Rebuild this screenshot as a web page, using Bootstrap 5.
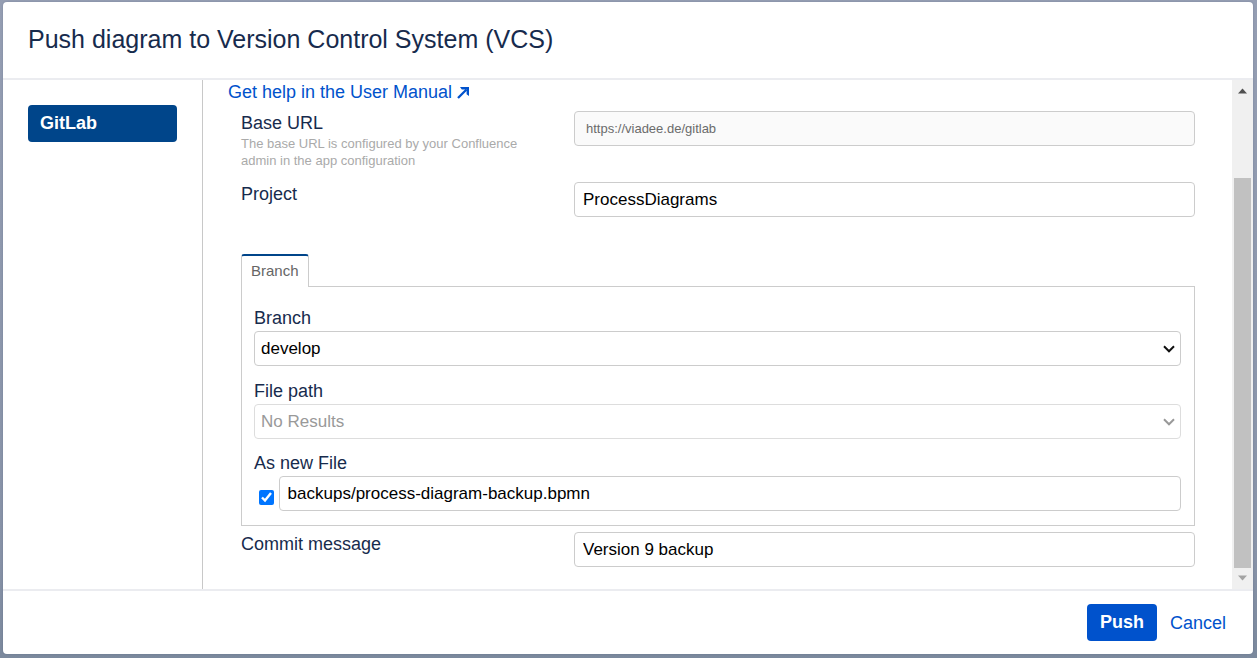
<!DOCTYPE html>
<html lang="en">
<head>
<meta charset="utf-8">
<meta name="viewport" content="width=device-width, initial-scale=1">
<title>Push diagram to Version Control System (VCS)</title>
<link href="https://cdn.jsdelivr.net/npm/bootstrap@5.3.0/dist/css/bootstrap.min.css" rel="stylesheet">
<style>
  body {
    font-family: "Liberation Sans", Arial, sans-serif;
    font-size: 18px;
    line-height: 24px;
    color: #172b4d;
    background: linear-gradient(#959eb3, #8792a7 85%, #7b899d);
  }
  .page { padding: 2px 4px 4px 3px; }
  .dialog { border-radius: 4px; box-shadow: 0 0 2px rgba(9, 30, 66, .2); overflow: hidden; }
  .dialog-head { height: 78px; padding: 0 25px 2px; border-bottom: 2px solid #ebecf0; }
  .dialog-head h1 { font-size: 25px; line-height: 32px; }
  .dialog-foot { height: 65px; padding: 0 27px 0 25px; border-top: 2px solid #ebecf0; gap: 13px; }
  a { color: #0052cc; text-decoration: none; }
  .side { width: 200px; padding: 25px; border-right: 1px solid #c8c8c8; }
  .side .nav-link {
    background: #00458a; color: #fff; font-weight: 700;
    border-radius: 4px; height: 37px; padding: 6px 12px;
  }
  .main { padding: 0 37px 22px 25px; min-width: 0; }
  .manual svg { vertical-align: -1px; }
  .fields { margin: 7px 0 0 13px; }
  .field-row { margin-bottom: 13px; }
  .label-cell { flex: 0 0 333px; }
  .label-cell small { display: block; max-width: 290px; font-size: 13px; line-height: 17px; color: #aaa; }
  .form-control, .form-select {
    height: 35px; border: 1px solid #ccc; border-radius: 4px;
    font-size: 17px; line-height: 24px; color: #000; padding: 4px 8px;
  }
  .form-control[readonly] { background: #fafafa; color: #6b6b6b; font-size: 13px; padding: 4px 11px; }
  .form-select {
    padding: 4px 32px 4px 6px;
    background-image: url("data:image/svg+xml,%3Csvg xmlns='http://www.w3.org/2000/svg' viewBox='0 0 12 8'%3E%3Cpath d='M1 1.3l5 5 5-5' fill='none' stroke='%23111' stroke-width='2'/%3E%3C/svg%3E");
    background-size: 12px 8px; background-position: right 5px center;
  }
  .form-select:disabled { background-color: #fff; color: #999; border-color: #ddd;
    background-image: url("data:image/svg+xml,%3Csvg xmlns='http://www.w3.org/2000/svg' viewBox='0 0 12 8'%3E%3Cpath d='M1 1.3l5 5 5-5' fill='none' stroke='%23999' stroke-width='2'/%3E%3C/svg%3E");
  }
  .nav-tabs { border: 0; margin-top: 37px; }
  .nav-tabs .nav-link, .nav-tabs .nav-link.active {
    font-size: 15px; line-height: 20px; color: #666; height: 33px; padding: 4px 9px 6px;
    border: 1px solid #ccc; border-top: 2px solid #00458a; border-bottom: 0;
    border-radius: 3px 3px 0 0; margin: 0; position: relative; z-index: 1;
  }
  .branch-box { border: 1px solid #ccc; margin-top: -1px; padding: 19px 13px 14px 12px; }
  .stack { margin-bottom: 12px; }
  .stack:first-child { margin-bottom: 13px; }
  .stack label { margin-bottom: 1px; }
  .new-file { gap: 5px; }
  .new-file input[type=checkbox] { width: 15px; height: 15px; margin: 7px 0 0 5px; accent-color: #0075ff; }
  .commit-row { margin-top: 6px; }
  .btn-push {
    background: #0052cc; color: #fff; font-weight: 700; font-size: 18px; line-height: 24px;
    height: 37px; padding: 5px 13px 7px; border: 0; border-radius: 4px;
  }
  .btn-push:hover { background: #0065ff; color: #fff; }
  .bar { width: 21px; background: #f0f0f0; padding: 8px 2px; }
  .bar svg { display: block; margin: 0 auto; }
  .thumb { margin: 84px 0 7px; background: #c1c1c1; }
</style>
</head>
<body>
<div class="page min-vh-100 d-flex">
  <div class="dialog bg-white flex-grow-1 d-flex flex-column" role="dialog" aria-labelledby="dialog-title">
    <header class="dialog-head d-flex align-items-center">
      <h1 id="dialog-title" class="fw-normal mb-0">Push diagram to Version Control System (VCS)</h1>
    </header>

    <div class="d-flex flex-grow-1">
      <nav class="side flex-shrink-0">
        <a class="nav-link" href="#gitlab" aria-current="page">GitLab</a>
      </nav>

      <form class="main flex-grow-1" id="push-form">
        <a class="manual d-block" href="#manual">Get help in the User Manual
          <svg width="12" height="13" viewBox="0 0 12 13" aria-hidden="true"><path d="M1 12L9.500 3.500" fill="none" stroke="#0052cc" stroke-width="2.300"/><path d="M3 1h9v9L9.600 8.200V3.400H4.800z" fill="#0052cc"/></svg></a>

        <div class="fields">
          <div class="field-row d-flex">
            <div class="label-cell"><label class="d-block" for="base-url">Base URL</label><small id="base-help">The base URL is configured by your Confluence admin in the app configuration</small></div>
            <div class="flex-grow-1"><input class="form-control" id="base-url" type="text" value="https://viadee.de/gitlab" aria-describedby="base-help" readonly></div>
          </div>
          <div class="d-flex">
            <div class="label-cell"><label class="d-block" for="project">Project</label></div>
            <div class="flex-grow-1"><input class="form-control" id="project" type="text" value="ProcessDiagrams"></div>
          </div>

          <ul class="nav nav-tabs">
            <li class="nav-item"><button class="nav-link active bg-white" id="branch-tab" type="button" data-bs-toggle="tab" data-bs-target="#branch-pane">Branch</button></li>
          </ul>
          <div class="branch-box" id="branch-pane" aria-labelledby="branch-tab">
            <div class="stack">
              <label class="d-block" for="branch">Branch</label>
              <select class="form-select" id="branch"><option>develop</option></select>
            </div>
            <div class="stack">
              <label class="d-block" for="path">File path</label>
              <select class="form-select" id="path" disabled><option>No Results</option></select>
            </div>
            <div class="stack mb-0">
              <label class="d-block" for="new-file">As new File</label>
              <div class="new-file d-flex align-items-center">
                <input id="new-file" type="checkbox" checked>
                <input class="form-control" type="text" aria-label="New file path" value="backups/process-diagram-backup.bpmn">
              </div>
            </div>
          </div>

          <div class="commit-row d-flex">
            <div class="label-cell"><label class="d-block" for="message">Commit message</label></div>
            <div class="flex-grow-1"><input class="form-control" id="message" type="text" value="Version 9 backup"></div>
          </div>
        </div>
      </form>

      <div class="bar flex-shrink-0 d-flex flex-column" aria-hidden="true">
        <svg width="9" height="6" viewBox="0 0 9 6"><path d="M0 5.500L4.500 0.500 9 5.500z" fill="#505050"/></svg>
        <div class="thumb flex-grow-1"></div>
        <svg width="9" height="6" viewBox="0 0 9 6"><path d="M0 0.500L4.500 5.500 9 0.500z" fill="#a3a3a3"/></svg>
      </div>
    </div>

    <footer class="dialog-foot d-flex align-items-center justify-content-end">
      <button class="btn btn-push" type="submit" form="push-form">Push</button>
      <a href="#cancel">Cancel</a>
    </footer>
  </div>
</div>
<script src="https://cdn.jsdelivr.net/npm/bootstrap@5.3.0/dist/js/bootstrap.bundle.min.js"></script>
</body>
</html>
